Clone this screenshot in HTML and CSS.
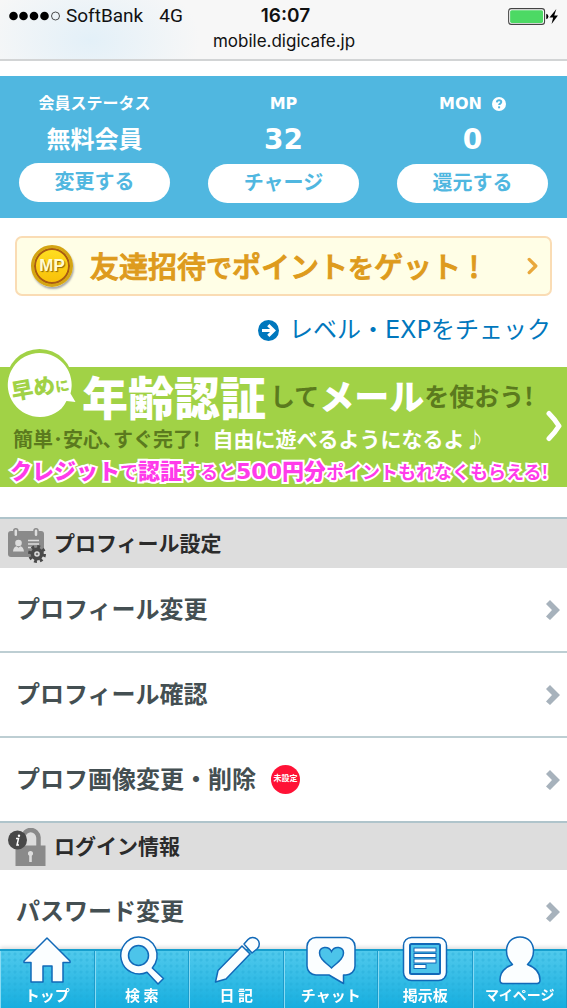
FILE: index.html
```html
<!DOCTYPE html>
<html lang="ja">
<head>
<meta charset="utf-8">
<meta name="viewport" content="width=device-width, initial-scale=1">
<title>mobile.digicafe.jp</title>
<link rel="stylesheet" href="styles.css">
</head>
<body>
<header class="browser">
  <div class="device">
    <div class="carrier">
      <svg class="signal" viewBox="0 0 52 10" aria-hidden="true"><g><circle cx="4.5" cy="5" r="4.3"/><circle cx="14.5" cy="5" r="4.3"/><circle cx="25" cy="5" r="4.3"/><circle cx="35.500" cy="5" r="4.3"/></g><circle cx="46.500" cy="5" r="4" fill="none" stroke="#222" stroke-width=".8"/></svg>
      <span>SoftBank</span><span class="network">4G</span>
    </div>
    <time class="clock">16:07</time>
    <svg class="battery" viewBox="0 0 48 16" aria-hidden="true"><rect x=".6" y=".6" width="33.800" height="14.800" rx="2.500" fill="#fff" stroke="#444"/><rect x="2" y="2" width="31" height="12" rx="1.500" fill="#4cd964"/><path d="M36 5.500q2 .5 2 2.500t-2 2.500z"/><path d="M45.500 1l-6.500 8h3.500l-1.500 6 6-8h-3.500z"/></svg>
  </div>
  <div class="address">mobile.digicafe.jp</div>
</header>

<main>
  <section class="status">
    <div class="stat">
      <h2 class="stat-label">会員ステータス</h2>
      <p class="stat-value stat-value-text">無料会員</p>
      <button type="button" class="pill">変更する</button>
    </div>
    <div class="stat">
      <h2 class="stat-label">MP</h2>
      <p class="stat-value">32</p>
      <button type="button" class="pill">チャージ</button>
    </div>
    <div class="stat">
      <h2 class="stat-label">MON
        <svg class="help" viewBox="0 0 14 14" aria-hidden="true"><circle cx="7" cy="7" r="7" fill="#fff"/><path d="M4.800 5.300C5 3.800 6 3.300 7.100 3.300c1.300 0 2.200.8 2.200 1.800 0 1.500-2.200 1.500-2.200 3" fill="none" stroke="#50b7e0" stroke-width="1.900"/><rect x="6.100" y="9.300" width="2" height="2" fill="#50b7e0"/></svg>
      </h2>
      <p class="stat-value">0</p>
      <button type="button" class="pill">還元する</button>
    </div>
  </section>

  <a class="invite" href="#invite">
    <span class="coin">MP</span>
    <span class="invite-text">友達招待<small>で</small>ポイント<small>を</small>ゲット<span class="bang">!</span></span>
    <svg class="invite-arrow" viewBox="0 0 10 16" aria-hidden="true"><path d="M2 2l6 6-6 6" fill="none" stroke="#e9a83c" stroke-width="3" stroke-linecap="round" stroke-linejoin="round"/></svg>
  </a>

  <a class="level" href="#level">
    <svg class="level-icon" viewBox="0 0 20 20" aria-hidden="true"><circle cx="10" cy="10" r="10" fill="#0077bd"/><path d="M3.800 10h11M9.800 4.800l5.200 5.200-5.200 5.200" fill="none" stroke="#fff" stroke-width="3"/></svg>
    <span>レベル・EXPをチェック</span>
  </a>

  <a class="promo" href="#verify">
    <span class="bubble">
      <svg class="bubble-shape" viewBox="0 0 70 70" aria-hidden="true"><circle cx="32.500" cy="33.500" r="33.500" fill="#a1d246"/><path d="M32.500 4a32 32 0 1 0 22 55.500 34 34 0 0 0 5-7.500l9 1-5-8.500A32 32 0 0 0 32.500 4z" fill="#fff"/></svg>
      <span class="bubble-text">早め<small>に</small></span>
    </span>
    <span class="promo-head"><b class="big">年齢認証</b><span class="dark">して</span><b class="mail">メール</b><span class="dark">を使おう!</span></span>
    <span class="promo-sub"><span class="dark">簡単･安心､すぐ完了!</span><span class="light">自由に遊べるようになるよ♪</span></span>
    <span class="promo-pink"><b>クレジット</b>で<b>認証</b>すると<b><span class="yen">500</span>円分</b>ポイントもれなくもらえる!</span>
    <svg class="promo-arrow" viewBox="0 0 18 32" aria-hidden="true"><path d="M4 3.500q6 6 10 12.500-4 6.500-10 12.500" fill="none" stroke="#fff" stroke-width="5" stroke-linecap="round" stroke-linejoin="round"/></svg>
  </a>

  <section class="group">
    <h2 class="group-title">
      <svg class="group-icon" viewBox="0 0 38 38" aria-hidden="true"><rect x="0" y="6" width="36" height="26" rx="3" fill="#8a8a8a"/><g fill="#ddd" stroke="#8a8a8a" stroke-width="1.500"><rect x="5.800" y="3.700" width="4" height="8" rx="2"/><rect x="26" y="3.700" width="4" height="8" rx="2"/></g><circle cx="10.500" cy="18" r="3.300" fill="#ddd"/><path d="M5 26.500q.5-5 3.700-5.300l1.800 1.600 1.800-1.600q3 .3 3.700 5.300z" fill="#ddd"/><path d="M20 15.500h11M20 19h11M20 22.500h5" stroke="#ddd" stroke-width="1.500"/><circle cx="29" cy="29" r="7.500" fill="none" stroke="#4a4a4a" stroke-width="3" stroke-dasharray="2.900 2.990"/><circle cx="29" cy="29" r="4.600" fill="#ddd" stroke="#4a4a4a" stroke-width="3.600"/><circle cx="29" cy="29" r="1.300" fill="#777"/></svg>
      プロフィール設定
    </h2>
    <ul class="rows">
      <li><a class="row" href="#edit">プロフィール変更<svg class="chevron" viewBox="0 0 14 20" aria-hidden="true"><path d="M0 4l4-4 10 10L4 20l-4-3.500L6 10z"/></svg></a></li>
      <li><a class="row" href="#view">プロフィール確認<svg class="chevron" viewBox="0 0 14 20" aria-hidden="true"><path d="M0 4l4-4 10 10L4 20l-4-3.500L6 10z"/></svg></a></li>
      <li><a class="row" href="#image">プロフ画像変更・削除<span class="unset">未設定</span><svg class="chevron" viewBox="0 0 14 20" aria-hidden="true"><path d="M0 4l4-4 10 10L4 20l-4-3.500L6 10z"/></svg></a></li>
    </ul>
  </section>
  <section class="group">
    <h2 class="group-title">
      <svg class="group-icon" viewBox="0 0 38 38" aria-hidden="true"><path d="M15 20V9.500a7.800 8.500 0 0 1 15.500 0V20" fill="none" stroke="#8a8a8a" stroke-width="4.500"/><rect x="7.500" y="17.500" width="30" height="20.500" fill="#8a8a8a"/><path d="M22.500 23a2.500 2.500 0 0 1 1.300 4.700V34h-2.600v-6.300a2.500 2.500 0 0 1 1.300-4.700z" fill="#ddd"/><circle cx="9.500" cy="12" r="9.500" fill="#484848"/><path d="M8 10.500h2.500l-1.500 6.500h2" fill="none" stroke="#fff" stroke-width="1.500"/><circle cx="11" cy="7.700" r="1.200" fill="#fff"/></svg>
      ログイン情報
    </h2>
    <ul class="rows">
      <li><a class="row" href="#password">パスワード変更<svg class="chevron" viewBox="0 0 14 20" aria-hidden="true"><path d="M0 4l4-4 10 10L4 20l-4-3.500L6 10z"/></svg></a></li>
    </ul>
  </section>
</main>

<nav class="tabs" aria-label="メニュー">
  <a class="tab" href="#top"><svg class="tab-icon" viewBox="0 0 50 50" aria-hidden="true"><path class="line" d="M25 2L48 25v1.500h-7V46H30V30h-9v16H9V26.500H2V25z"/></svg><span>トップ</span></a>
  <a class="tab" href="#search"><svg class="tab-icon" viewBox="0 0 50 50" aria-hidden="true"><path class="line" d="M21.500 1a18.500 18.500 0 0 1 13.800 31l11.200 10.500-5.500 5.500L30 36.300A18.500 18.500 0 1 1 21.500 1z"/><circle cx="21.500" cy="19.500" r="10" fill="#4cc4ea" stroke="#1169b8" stroke-width="1.500"/></svg><span>検 索</span></a>
  <a class="tab" href="#diary"><svg class="tab-icon" viewBox="0 0 50 50" aria-hidden="true"><path class="line" d="M31 10l8 8-24 25-10.500 3L7 34.500z"/><path class="line" d="M33 8l4-4.500a6.500 6.500 0 0 1 9.500 9L41 17z"/></svg><span>日 記</span></a>
  <a class="tab" href="#chat"><svg class="tab-icon" viewBox="0 0 50 50" aria-hidden="true"><path class="line" d="M10 1.500h30a9 9 0 0 1 9 9V30a9 9 0 0 1-9 9h-2.500v8.500L23 39H10a9 9 0 0 1-9-9V10.500a9 9 0 0 1 9-9z"/><path d="M25.500 32C19 26 13.500 22.500 13.500 17c0-6.500 9-7.500 12-1.500 3-6 12-5 12 1.500 0 5.500-5.500 9-12 15z" fill="#4cc4ea" stroke="#1169b8" stroke-width="1.500"/></svg><span>チャット</span></a>
  <a class="tab" href="#board"><svg class="tab-icon" viewBox="0 0 50 50" aria-hidden="true"><rect class="line" x="3.500" y="1.500" width="43" height="43" rx="8"/><rect x="10" y="8" width="30" height="30" rx="1.500" fill="#4cc4ea" stroke="#1169b8" stroke-width="2"/><g fill="#fff" stroke="#1169b8"><rect x="14" y="12" width="22" height="4"/><rect x="14" y="17.500" width="22" height="4"/><rect x="14" y="23" width="22" height="4"/><rect x="14" y="28.500" width="12" height="4"/></g></svg><span>掲示板</span></a>
  <a class="tab" href="#mypage"><svg class="tab-icon" viewBox="0 0 50 50" aria-hidden="true"><path class="line" d="M25 1c8 0 13.500 5.500 13.500 14 0 6-2.500 10-6 13.500C39 31 45 35 45 44q0 3.500-3 3.500H8q-3 0-3-3.500c0-9 6-13 12.500-15.500-3.500-3.500-6-7.500-6-13.500C11.500 6.500 17 1 25 1z"/></svg><span>マイページ</span></a>
</nav>
</body>
</html>
```
FILE: styles.css
```css
* { box-sizing: border-box; }
body {
  margin: 0;
  background: #fff;
  color: #444f52;
  font-family: "DejaVu Sans", "Noto Sans CJK JP", sans-serif;
}
a { color: inherit; text-decoration: none; }
h2, p, ul { margin: 0; padding: 0; }
ul { list-style: none; }
svg { display: block; flex: none; }
button { border: 0; font-family: inherit; cursor: pointer; }

.browser {
  height: 61px;
  padding: 5px 8px 0 9px;
  border-bottom: 2px solid #d2d4d5;
  background: radial-gradient(ellipse 110px 70px at 90px 40px, #e3f0f8, #f7f7f7);
  color: #111;
  font-family: Inter, sans-serif;
}
.device {
  display: grid;
  grid-template-columns: 1fr auto 1fr;
  align-items: center;
  height: 22px;
  font-size: 19px;
  line-height: 22px;
}
.carrier { display: flex; align-items: center; gap: 5px; font-family: Roboto, sans-serif; }
.network { margin-left: 11px; }
.signal { width: 52px; height: 10px; }
.clock { padding-left: 3px; font-weight: 600; }
.battery { width: 51px; height: 17px; justify-self: end; }
.address { font-size: 17px; line-height: 29px; text-align: center; }

.status {
  display: grid;
  grid-template-columns: repeat(3, 1fr);
  margin-top: 15px;
  padding: 16px 0 15px;
  background: #50b7e0;
  color: #fff;
}
.stat { display: flex; flex-direction: column; align-items: center; }
.stat-label {
  display: flex;
  align-items: center;
  gap: 10px;
  height: 24px;
  font-size: 16px;
  line-height: 24px;
  font-weight: 700;
}
.help { width: 14px; height: 14px; }
.stat-value { height: 48px; font-size: 28px; line-height: 48px; font-weight: 700; }
.stat-value-text { height: 47px; font-size: 24px; }
.pill {
  width: 80%;
  height: 39px;
  padding: 0;
  border-radius: 20px;
  background: #fff;
  color: #50b7e0;
  font-size: 20px;
  line-height: 39px;
  font-weight: 700;
}

.invite {
  display: flex;
  align-items: center;
  height: 60px;
  margin: 18px 15px 0;
  padding: 0 12px 0 14px;
  border: 2px solid #fadcb4;
  border-radius: 7px;
  background: #fffee6;
  color: #de9b1d;
}
.coin {
  width: 42px;
  height: 42px;
  border: 3px solid #d4a514;
  border-radius: 50%;
  background: linear-gradient(#ffdf22, #f8bf08);
  box-shadow: inset 0 0 0 2px #a85b13, 1px 2px 2px #aaa;
  color: #fffbd0;
  font: 700 17px/36px "Liberation Sans", sans-serif;
  text-align: center;
  text-shadow: 1px 1px 1px #8c6508;
}
.invite-text {
  flex: 1;
  margin-left: 17px;
  font-family: "Noto Sans CJK JP", sans-serif;
  font-size: 29px;
  line-height: 40px;
  font-weight: 500;
  white-space: nowrap;
  -webkit-text-stroke: 1px #de9b1d;
}
.invite-text small { font-size: 26px; }
.bang { margin-left: 8px; }
.invite-arrow { width: 11px; height: 18px; }

.level {
  display: flex;
  align-items: center;
  justify-content: flex-end;
  gap: 10px;
  margin: 16px 16px 0;
  color: #0077bd;
  font-size: 24px;
  line-height: 36px;
}
.level-icon { width: 21px; height: 21px; }

.promo {
  position: relative;
  display: block;
  height: 120px;
  margin-top: 19px;
  background: #a1d246;
  color: #fff;
  font-family: "Noto Sans CJK JP", sans-serif;
  font-weight: 700;
  white-space: nowrap;
}
.bubble { position: absolute; left: 7px; top: -18px; width: 70px; height: 70px; }
.bubble-shape { width: 70px; height: 70px; }
.bubble-text {
  position: absolute;
  left: 4px;
  top: 22px;
  color: #a1d246;
  font-size: 22px;
  line-height: 28px;
  font-weight: 900;
  transform: rotate(-10deg);
}
.bubble-text small { font-size: 14px; }
.promo-head { display: flex; align-items: center; }
.promo-sub, .promo-pink { display: flex; align-items: baseline; }
.promo-head { height: 56px; padding-left: 82px; font-size: 25px; line-height: 56px; }
.big { margin-right: 4px; font-size: 46px; font-weight: 900; }
.mail { font-size: 35px; font-weight: 900; }
.dark { color: #5b7a1e; }
.promo-sub { height: 31px; gap: 12px; padding-left: 13px; font-size: 20px; line-height: 31px; }
.light { font-size: 21px; }
.promo-pink {
  height: 30px;
  padding-left: 10px;
  color: #ff3bea;
  font-size: 18px;
  line-height: 30px;
  -webkit-text-stroke: 4px #fff;
  paint-order: stroke fill;
}
.promo-pink b { font-size: 22px; }
.yen { font-family: "DejaVu Sans", sans-serif; }
.promo-arrow { position: absolute; right: 4px; top: 43px; width: 18px; height: 32px; }

.promo + .group { margin-top: 30px; }
.group-title {
  display: flex;
  align-items: center;
  gap: 8px;
  height: 51px;
  padding-left: 8px;
  border-top: 2px solid #afc4cb;
  background: #ddd;
  color: #2b2b2b;
  font-size: 21px;
  line-height: 48px;
  font-weight: 700;
}
.group + .group .group-title { height: 49px; }
.group-icon { width: 38px; height: 38px; }
.rows li + li { border-top: 2px solid #bdced3; }
.row {
  display: flex;
  align-items: center;
  height: 83px;
  padding: 0 7px 0 16px;
  font-size: 24px;
  line-height: 36px;
  font-weight: 700;
}
.chevron { width: 14px; height: 20px; margin-left: auto; fill: #a7b2bc; }
.unset {
  width: 29px;
  height: 29px;
  margin-left: 15px;
  border-radius: 50%;
  background: #ff1236;
  color: #fff;
  font-size: 8px;
  line-height: 28px;
  font-weight: 700;
  text-align: center;
}

.tabs {
  position: fixed;
  left: 0;
  right: 0;
  bottom: 0;
  display: grid;
  grid-template-columns: repeat(6, 1fr);
  height: 59px;
  border-top: 2px solid #169fce;
  background:
    radial-gradient(circle, #20a9d555 1px, transparent 2px) 0 0 / 6px 6px,
    linear-gradient(#50c9ec, #16aedf);
  box-shadow: 0 -2px 4px #0002;
}
.tab {
  display: flex;
  flex-direction: column;
  align-items: center;
  border-left: 1px solid #88dbf3;
  border-right: 1px solid #1b9bcb;
  color: #fff;
  font-family: "Noto Sans CJK JP", sans-serif;
  font-size: 15px;
  line-height: 17px;
  font-weight: 700;
  white-space: nowrap;
}
.tab:last-child { font-size: 14px; }
.tab-icon { width: 50px; height: 50px; margin-top: -15px; }
.line { fill: #fbfeff; stroke: #1169b8; stroke-width: 1.5; stroke-linejoin: round; }
```
